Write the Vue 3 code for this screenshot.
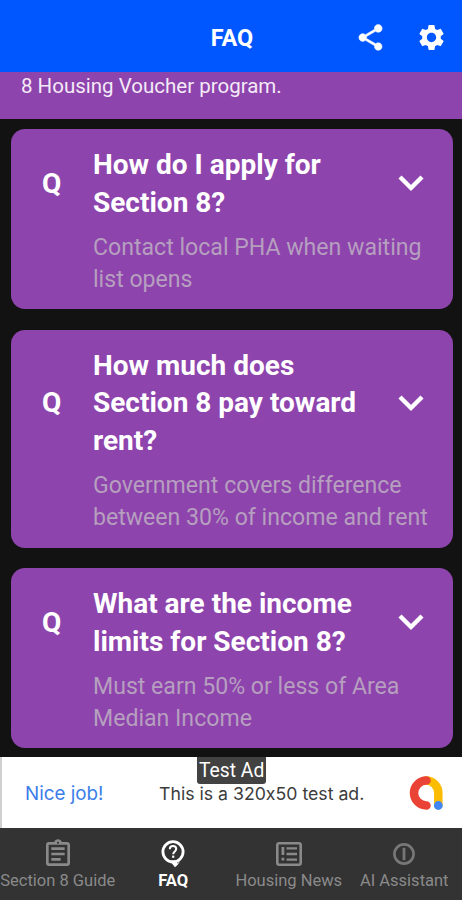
<script setup>
import { ref } from 'vue'

const faqs = ref([
  { question: 'How do I apply for Section 8?', answer: 'Contact local PHA when waiting list opens' },
  {
    question: 'How much does Section 8 pay toward rent?',
    answer: 'Government covers difference between 30% of income and rent'
  },
  {
    question: 'What are the income limits for Section 8?',
    answer: 'Must earn 50% or less of Area Median Income'
  }
])

const tabs = ['Section 8 Guide', 'FAQ', 'Housing News', 'AI Assistant']
const activeTab = ref('FAQ')
</script>

<template>
  <div class="screen">
    <header class="app-bar">
      <h1 class="app-title">FAQ</h1>
      <div class="app-actions">
        <button class="icon-btn share" aria-label="Share">
          <svg width="31" height="31" viewBox="0 0 24 24">
            <path
              d="M18 16.08c-.76 0-1.44.3-1.96.77L8.91 12.7c.05-.23.09-.46.09-.7s-.04-.47-.09-.7l7.05-4.11c.54.5 1.25.81 2.04.81 1.66 0 3-1.34 3-3s-1.34-3-3-3-3 1.34-3 3c0 .24.04.47.09.7L8.04 9.81C7.5 9.31 6.79 9 6 9c-1.66 0-3 1.34-3 3s1.34 3 3 3c.79 0 1.5-.31 2.04-.81l7.12 4.16c-.05.21-.08.43-.08.65 0 1.61 1.31 2.92 2.92 2.92s2.92-1.31 2.92-2.92-1.31-2.92-2.92-2.92z"
            />
          </svg>
        </button>
        <button class="icon-btn" aria-label="Settings">
          <svg width="31" height="31" viewBox="0 0 24 24">
            <path
              d="M19.14 12.94c.04-.3.06-.61.06-.94 0-.32-.02-.64-.07-.94l2.03-1.58c.18-.14.23-.41.12-.61l-1.92-3.32c-.12-.22-.37-.29-.59-.22l-2.39.96c-.5-.38-1.03-.7-1.62-.94l-.36-2.54c-.04-.24-.24-.41-.48-.41h-3.84c-.24 0-.43.17-.47.41l-.36 2.54c-.59.24-1.13.57-1.62.94l-2.39-.96c-.22-.08-.47 0-.59.22L2.74 8.87c-.12.21-.08.47.12.61l2.03 1.58c-.05.3-.09.63-.09.94s.02.64.07.94l-2.03 1.58c-.18.14-.23.41-.12.61l1.92 3.32c.12.22.37.29.59.22l2.39-.96c.5.38 1.03.7 1.62.94l.36 2.54c.05.24.24.41.48.41h3.84c.24 0 .44-.17.47-.41l.36-2.54c.59-.24 1.13-.56 1.62-.94l2.39.96c.22.08.47 0 .59-.22l1.92-3.32c.12-.22.07-.47-.12-.61l-2.01-1.58zM12 15.6c-1.98 0-3.6-1.62-3.6-3.6s1.62-3.6 3.6-3.6 3.6 1.62 3.6 3.6-1.62 3.6-3.6 3.6z"
            />
          </svg>
        </button>
      </div>
    </header>

    <main class="content">
      <p class="intro">8 Housing Voucher program.</p>

      <section class="faq-list">
        <article v-for="faq in faqs" :key="faq.question" class="faq-card">
          <div class="faq-head">
            <span class="faq-mark">Q</span>
            <h2 class="faq-question">{{ faq.question }}</h2>
            <svg class="chevron" width="26" height="17" viewBox="0 0 26 17">
              <path d="M2 2 13 13 24 2" />
            </svg>
          </div>
          <p class="faq-answer">{{ faq.answer }}</p>
        </article>
      </section>
    </main>

    <aside class="ad">
      <span class="ad-badge">Test Ad</span>
      <span class="ad-praise">Nice job!</span>
      <span class="ad-text">This is a 320x50 test ad.</span>
      <svg class="ad-logo" width="36" height="36" viewBox="0 0 36 36">
        <path d="M18 5.5A12.3 12.3 0 0 1 30.3 18V30" stroke="#fbbc04" />
        <path d="M18.5 5.5A12.5 12.5 0 0 0 18.5 30.5" stroke="#ea4335" />
        <circle cx="30.3" cy="30.5" r="4.4" fill="#4285f4" />
      </svg>
    </aside>

    <nav class="tab-bar">
      <button
        v-for="tab in tabs"
        :key="tab"
        class="tab"
        :class="{ active: tab === activeTab }"
        @click="activeTab = tab"
      >
        <span class="tab-icon">
          <svg v-if="tab === 'Section 8 Guide'" width="32" height="32" viewBox="0 0 24 24">
            <path
              d="M7 15h7v2H7zm0-4h10v2H7zm0-4h10v2H7zm12-4h-4.18C14.4 1.84 13.3 1 12 1s-2.4.84-2.82 2H5c-1.1 0-2 .9-2 2v14c0 1.1.9 2 2 2h14c1.1 0 2-.9 2-2V5c0-1.1-.9-2-2-2zm-7-.25c.41 0 .75.34.75.75s-.34.75-.75.75-.75-.34-.75-.75.34-.75.75-.75zM19 19H5V5h14v14z"
            />
          </svg>
          <svg v-else-if="tab === 'FAQ'" width="24" height="28" viewBox="0 0 24 28">
            <circle class="ring" cx="12" cy="11.8" r="10.1" />
            <path d="M10.5 20.5h5.5v3l3-2.2c-1.4 2.6-3 4.4-5 6l-3.5-4.3z" />
            <path class="hook" d="M8.8 9.2C8.8 7.2 10.2 6 12 6s3.2 1.2 3.2 3c0 2.3-3 2.6-3 5.2" />
            <path d="M11.1 15.6h2.2v2.2h-2.2z" />
          </svg>
          <svg v-else-if="tab === 'Housing News'" width="26" height="24" viewBox="0 0 26 24">
            <rect class="line" x="1.3" y="1.3" width="23.4" height="21.4" rx="2" />
            <path d="M5.5 5h2.8v8H5.5zM5.5 15.8h2.8v2.8H5.5zM10.5 5.2h10.5v2.4H10.5zM10.5 10.8h10.5v2.4H10.5zM10.5 16.4h10.5v2.4H10.5z" />
          </svg>
          <svg v-else class="dim" width="22" height="22" viewBox="0 0 22 22">
            <circle class="line" cx="11" cy="11" r="9.6" />
            <path d="M9.6 4.8h2.8v12.4H9.6z" />
          </svg>
        </span>
        <span class="tab-label">{{ tab }}</span>
      </button>
    </nav>
  </div>
</template>

<style>
body {
  margin: 0;
  background-color: #111;
}
</style>

<style scoped>
.screen {
  display: flex;
  flex-direction: column;
  width: 462px;
  height: 900px;
  overflow: hidden;
  background-color: #121212;
  color: white;
  font-family: Roboto, 'Noto Sans', sans-serif;
}

button {
  padding: 0;
  background: none;
  border: none;
  font-family: inherit;
  cursor: pointer;
}

svg {
  display: block;
  fill: currentColor;
}

.app-bar {
  display: grid;
  grid-template-columns: 1fr auto 1fr;
  align-items: center;
  flex: none;
  height: 72px;
  padding-top: 3px;
  box-sizing: border-box;
  background-color: #0057ff;
}

.app-title {
  grid-column: 2;
  margin: 0;
  padding-left: 2px;
  font-size: 23.4px;
  line-height: 30px;
  font-weight: 700;
}

.app-actions {
  display: flex;
  align-items: center;
  justify-content: flex-end;
  gap: 30px;
  padding: 0 15px 1px 0;
}

.icon-btn {
  color: white;
}

.share svg {
  stroke: white;
  stroke-width: 0.4;
}

.content {
  flex: 1;
  min-height: 0;
  overflow: hidden;
}

.intro {
  height: 47px;
  margin: 0;
  padding-left: 21px;
  background-color: #8e44ad;
  color: #f4eaf7;
  font-size: 20.5px;
  line-height: 28px;
}

.faq-list {
  display: flex;
  flex-direction: column;
  gap: 20.6px;
  padding: 10px 9px 0 11px;
}

.faq-card {
  padding: 17px 22px 13.5px 30px;
  border-radius: 14px;
  background-color: #8e44ad;
}

.faq-head {
  display: grid;
  grid-template-columns: 52px 1fr 33px;
  align-items: center;
}

.faq-mark {
  padding-left: 1px;
  font-size: 28px;
  line-height: 32px;
  font-weight: 700;
}

.faq-question {
  margin: 0;
  padding-right: 20px;
  font-size: 28px;
  line-height: 37.8px;
  font-weight: 700;
}

.chevron {
  fill: none;
  stroke: white;
  stroke-width: 4.4;
}

.faq-answer {
  margin: 10px -10px 0 52px;
  color: #b69fbf;
  font-size: 23.1px;
  line-height: 32px;
}

.ad {
  position: relative;
  display: flex;
  align-items: center;
  flex: none;
  height: 71px;
  padding: 2px 18px 0 23px;
  box-sizing: border-box;
  border-left: 2px solid #d0d0d0;
  background-color: white;
}

.ad-badge {
  position: absolute;
  top: 0;
  left: 195px;
  padding: 0 2px;
  border-radius: 0 0 3px 3px;
  background-color: #424242;
  font-size: 19.3px;
  line-height: 27px;
}

.ad-praise {
  width: 134px;
  color: #3b7de9;
  font-family: Inter, sans-serif;
  font-size: 18.8px;
}

.ad-text {
  color: #3c3c3c;
  font-family: Inter, sans-serif;
  font-size: 17.7px;
  font-feature-settings: 'calt' 0;
}

.ad-logo {
  margin: -1px 0 0 auto;
}

.ad-logo path {
  fill: none;
  stroke-width: 8.5;
  stroke-linecap: round;
}

.tab-bar {
  display: grid;
  grid-template-columns: repeat(4, 1fr);
  flex: none;
  height: 72px;
  background-color: #333;
}

.tab {
  display: flex;
  flex-direction: column;
  align-items: center;
  padding-top: 10px;
  color: #8a8a8a;
}

.tab.active {
  color: white;
}

.tab-icon {
  display: flex;
  align-items: center;
  justify-content: center;
  height: 32px;
}

.tab-label {
  font-size: 16.5px;
  line-height: 21px;
  white-space: nowrap;
}

.tab.active .tab-label {
  font-weight: 700;
}

.line {
  fill: none;
  stroke: currentColor;
  stroke-width: 2.6;
}

.ring {
  fill: none;
  stroke: currentColor;
  stroke-width: 2.8;
}

.hook {
  fill: none;
  stroke: currentColor;
  stroke-width: 2;
}

.dim {
  color: #777;
}
</style>
